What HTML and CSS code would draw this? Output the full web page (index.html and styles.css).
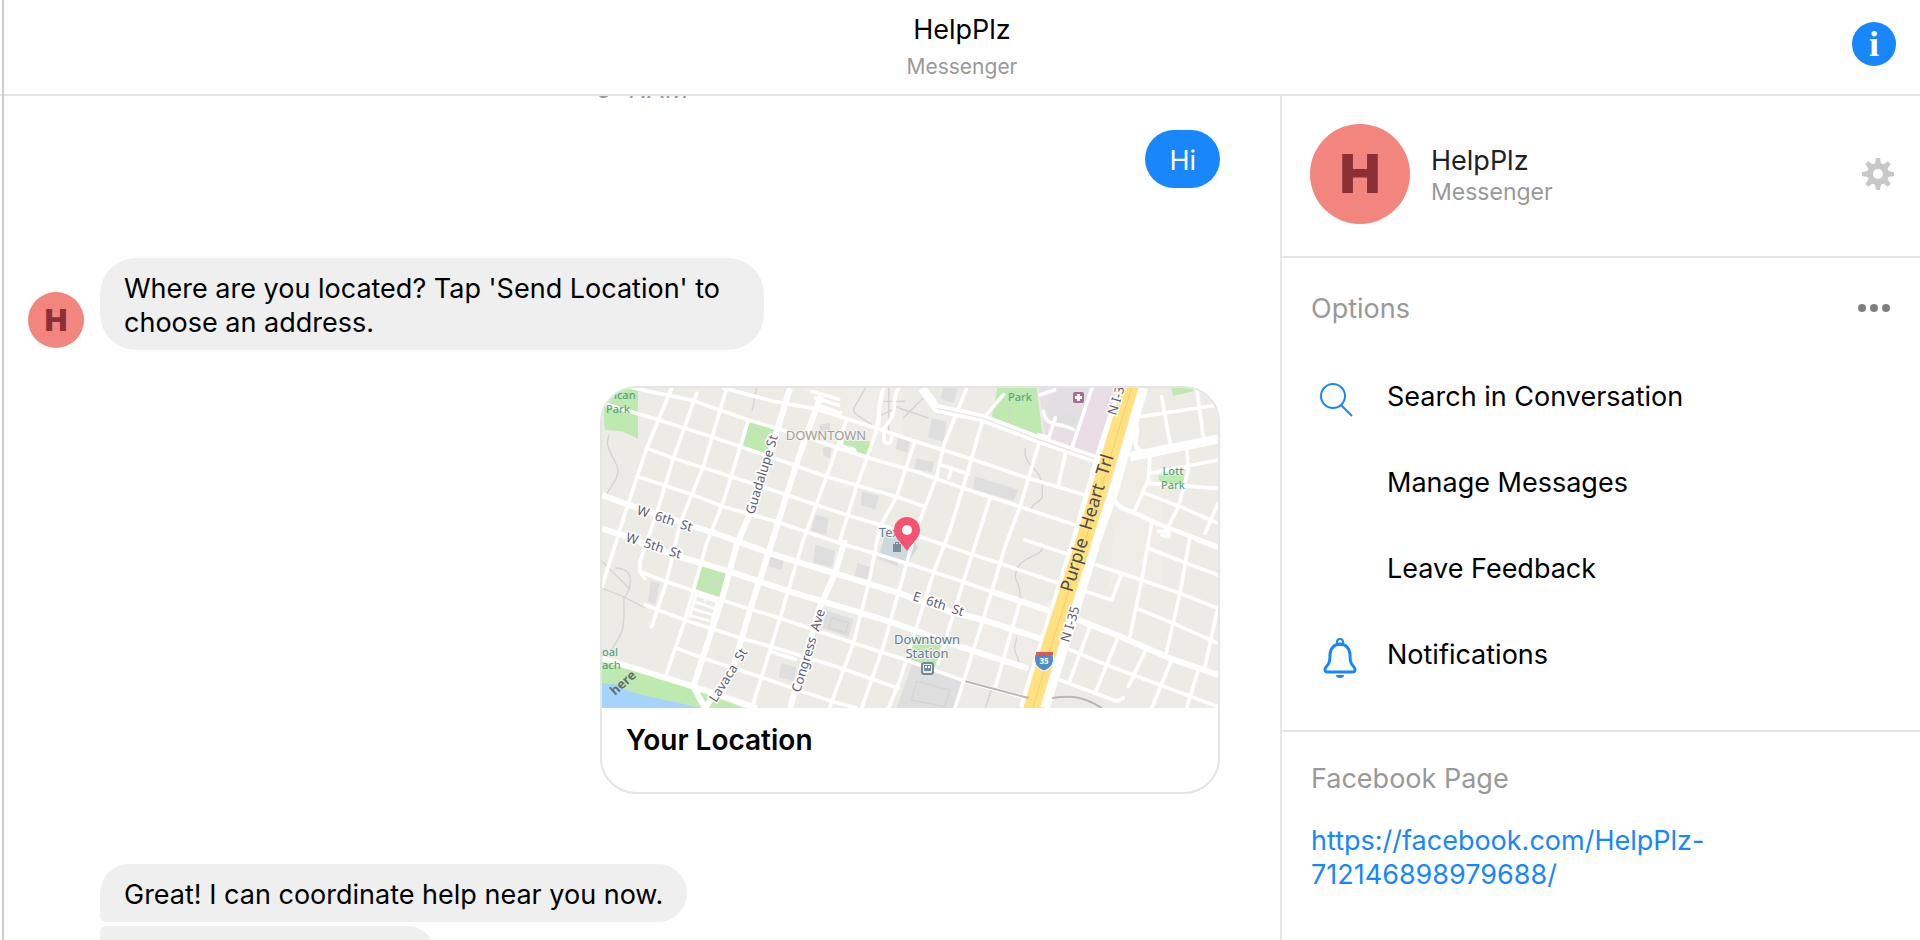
FILE: index.html
```html
<!DOCTYPE html>
<html lang="en">
<head>
<meta charset="utf-8">
<title>HelpPlz - Messenger</title>
<link rel="stylesheet" href="styles.css">
</head>
<body>
<div class="app">
  <header class="topbar">
    <div class="topbar-title">
      <h1 class="name">HelpPlz</h1>
      <p class="meta">Messenger</p>
    </div>
    <button class="info" type="button" aria-label="Conversation information">i</button>
  </header>
  <div class="body">
    <main class="chat">
      <p class="stamp">9:41AM</p>
      <div class="row out"><p class="bubble mine">Hi</p></div>
      <div class="row in">
        <span class="avatar small">H</span>
        <p class="bubble theirs">Where are you located? Tap 'Send Location' to choose an address.</p>
      </div>
      <div class="row out">
        <article class="card">
          <svg class="map" viewBox="0 0 616 320" role="img" aria-label="Map of downtown">
            <g transform="scale(.33333)">
              <path fill="#f0ece8" d="M1560 200h120v400h-160zM1160 640h200v180h-240zM600 0h300v300h-200z"/>
              <path fill="#eaddE6" d="M1310 0H1560L1480 200 1330 150z"/>
              <path fill="#e1dfe1" d="M1360 0h120l-70 140-90-60z"/>
              <g fill="#beeab0">
                <path d="M0 0H108V152L60 130 8 125zM443 100 516 123 495 198 423 176zM710 156 814 160 804 205 700 165zM1186 0h118l18 145-155-45zM1708 0h66v10l-60 14zM1670 262h78v30l-50 4-28-20zM300 528l78 24-20 76-78-24zM930 730l88 40-20 70-72-22zM0 800l264 90 160 70H300L0 900z"/>
              </g>
              <path fill="#a5d3fb" d="M0 886 60 890 124 922 300 960H0z"/>
              <path fill="#beeab0" d="M60 890l64 22v10l-60-18z"/>
              <g fill="#dfdede">
                <path d="M652 110l32-6v30l-30-6zM662 180l28-8-6 40-20-10zM886 150l36 10-6 34-34-10zM780 310l50 14-10 40-44-12zM640 380l40 10-8 50-44-12zM640 470l60 18-10 50-56-14zM840 470l56 20-10 44-60-20zM505 505l40 12-6 30-40-12zM766 525l44 14-8 36-44-12zM146 580l28 6-14 62-22-6zM674 668l80 26-14 52-80-26zM538 826l46 12-10 42-44-12zM1024 0h44l-14 46-38-14zM990 90l44 12-10 60-46-14zM944 212l52 10-6 30-54-10zM1120 265l128 40-12 34-124-36zM1370 70l56 20-10 20-60-10zM930 830l150 50-24 80H884z"/>
              </g>
              <path fill="#cfd8dd" d="M852 418h60l36 60-30 45-82-26z"/>
              <g fill="none" stroke="#d4d3d2" stroke-width="4">
                <path d="M22 140C0 180 50 220 48 250S20 300 14 320M0 520l80 80M0 600l60 24 70 36M40 540c60 0 50 60 26 90 0 100 4 90-40 160M464 0l-14 70M450 105l60 70M790 0c-40 80-60 60 20 110M860 0v130M830 40l80 0M834 84l60-30M904 90l60-60M890 60l90 30M1226 60c-20 60 20 50 26 90M1270 180c-10 60 60 60 50 130 10 40-40 30-30 60M1320 480c0 30-80 20-80 90 20 40 10 40 16 60M1244 750c-20 60 20 50 0 90M1170 900l-20 60"/>
                <path stroke="#d6d5d5" d="M944 880l100 26-16 50-100-20zM310 550l60 70M370 560l-70 50M690 690l50 14-10 30-50-14z"/>
              </g>
              <g fill="none" stroke="#fff" stroke-linecap="round" stroke-linejoin="round" stroke-width="11">
                <path d="M94 0 274 38 439 96 624 151 709 181 804 211 944 251 1084 301 1254 356 1419 411"/>
                <path d="M364 0 519 41 634 61 824 121 934 158 1109 213 1279 271 1449 321"/>
                <path d="M0 46 154 91 329 146 504 206 674 266 884 326 969 356"/>
                <path d="M134 181 214 211 389 266 554 321 734 381 954 446 1114 501 1194 526 1369 586"/>
                <path d="M109 266 274 321 364 356 524 401 714 466 834 501 914 526 1084 581 1169 611"/>
                <path d="M114 551 194 581 359 636 534 691 654 731 834 791 914 816 1094 881 1279 931"/>
                <path d="M129 651 249 696 419 751 509 776 719 841 889 901"/>
                <path d="M224 781 304 811 474 866 604 911 694 941 764 960M510 792l70 22"/>
                <path d="M1484 531 1619 576 1734 616 1848 661M1439 606l90 30 30-80M1394 781l120 50 160 60 174 65M1604 661l110 45 134 60M1639 481l115 45 94 35M1784 456l64 25M1269 456l120 40M1374 876l170 64 20-10"/>
                <path d="M209 0 134 181 74 361 0 596M284 16 214 211 164 376 114 521v30l14 20M374 0 304 236 234 406 194 581 149 716M439 96 364 341 314 466 249 696 194 856"/>
                <path d="M734 96 674 266 604 456 534 691 454 946M844 0l-24 140M824 126 764 296 714 456M939 158 884 326 834 416 799 591 754 766 684 956M1094 0 1024 176 1004 266 939 436 914 526 844 776 779 960M1204 20 1144 91 1084 296 1044 426 994 556 894 876 860 960"/>
                <path d="M1314 156 1254 356 1209 476 1169 611 1124 756 1059 960M1394 181l-25 110M1164 331 1124 456 1084 581 1009 826M1254 641 1179 901M1020 232l80 26M1050 240l-10 30"/>
                <path d="M1614 86 1848 51M1679 26l25 140M1784 0l20 146M1644 256l204-40M1644 201l-5 75-40 90M1639 286l209 15M1629 316l105 40 114 50M1754 176l5 70-30 110-30 60M1848 346l-39 90M1649 406 1619 576 1584 746M1764 446l-30 170-40 175M1848 656l-39 180M1464 716l-60 160M1549 746l-70 170M1634 781l-55 115M1709 816l-60 144M1789 846l-35 114M1670 430h30v16l-20-4M1314 20l44-14M1324 70c10 50 40 30 90 54M1470 0 1409 181M1360 90l-20 60-30-10"/>
                <path d="M630 10l80 24M640 30l70 22M655 55l60 20M844 0c-20 60-10 80-14 110M890 0c-30 50 10 60-44 120v40c10 14 24 4 24-14M720 156c-10 40 40 10 40 40"/>
              </g>
              <path fill="none" stroke="#fff" stroke-width="8" d="M280 620l66 22M274 640l66 22M268 661l66 20M262 682l60 16M284 616l-22 74M346 640l-20 68M312 626l-4 14"/>
              <g fill="none" stroke="#fff" stroke-linejoin="round" stroke-width="18">
                <path d="M0 321 94 356 354 441 504 496 699 556 894 616 1044 671 1144 696 1329 756"/>
                <path d="M0 422 74 446 214 501 384 551 564 611 664 641 864 701 1074 776 1279 841M0 811 114 846 274 896 464 960"/>
                <path d="M564 0 504 196 444 376 404 471 359 636 274 896 309 960M659 16 584 226 504 481 444 666 394 836 309 960M729 456 699 556 654 656 604 826 564 960M1169 611 1349 671M1429 696 1544 741 1704 811 1848 861"/>
              </g>
              <path fill="none" stroke="#fff" stroke-width="26" d="M960 0 1004 61 1144 91 1314 156 1500 220"/>
              <path fill="none" stroke="#e8e6e2" stroke-width="4" d="M1004 61 1144 91 1314 156 1500 220"/>
              <path fill="none" stroke="#fff" stroke-width="28" d="M1554 20 1504 170 1414 481 1264 960M1624 0 1594 106 1534 316 1484 456 1439 606 1329 960M1584 206 1848 153"/>
              <path fill="none" stroke="#fff" stroke-width="14" d="M1594 86c30 60-20 80 30 110M1534 316c0 40 20 40 80 66l50 24 184 70"/>
              <path fill="none" stroke="#ffe17f" stroke-width="48" d="M1588 -14 1584 0 1439 481 1349 756 1289 960 1285 974"/>
              <path fill="none" stroke="#f3cd6f" stroke-width="3" d="M1588 0 1443 481 1353 756 1293 960"/>
              <path fill="none" stroke="#b8b7b7" stroke-width="6" d="M1090 880l190 50M1350 930c70-10 100 0 150 30"/>
            </g>
            <g class="map-road">
              <text transform="translate(34 126) rotate(18)">W&#160; 6th&#160; St</text>
              <text transform="translate(23 153) rotate(18)">W&#160; 5th&#160; St</text>
              <text transform="translate(310 212) rotate(18)">E&#160; 6th&#160; St</text>
              <text transform="translate(152 127) rotate(-73)">Guadalupe St</text>
              <text transform="translate(198 305) rotate(-73)">Congress&#160; Ave</text>
              <text transform="translate(114 315) rotate(-58)">Lavaca&#160; St</text>
              <text transform="translate(514 28) rotate(-73)">N I-35</text>
              <text transform="translate(467 255) rotate(-73)">N I-35</text>
            </g>
            <text class="map-highway" transform="translate(470 205) rotate(-73)">Purple&#160; Heart&#160; Trl</text>
            <text class="map-area" x="224" y="52" text-anchor="middle">DOWNTOWN</text>
            <g class="map-park">
              <text x="12" y="11">ican</text><text x="4" y="25">Park</text>
              <text x="406" y="13">Park</text>
              <text x="571" y="87" text-anchor="middle">Lott</text><text x="571" y="101" text-anchor="middle">Park</text>
              <text x="0" y="268">oal</text><text x="0" y="281">ach</text>
            </g>
            <g class="map-place" text-anchor="middle">
              <text x="287" y="149">Tex</text>
              <text x="325" y="256">Downtown</text><text x="325" y="270">Station</text>
            </g>
            <text class="map-logo" transform="translate(13 308) rotate(-42)">here</text>
            <path fill="#7a8d9b" d="M291 156h8v8h-8zM293 156v-2h4v2h-1v-1h-2v1z"/>
            <rect x="320" y="275" width="11" height="11" rx="2" fill="#e9eef2" stroke="#71899a" stroke-width="2"/>
            <path fill="#71899a" d="M322 277h7v6h-7z"/><path fill="#fff" d="M323 278h2v2h-2zM326 278h2v2h-2z"/>
            <rect x="471" y="4" width="11" height="11" rx="2" fill="#a96c93"/>
            <path fill="#fff" d="M475 6h3v2h2v3h-2v2h-3v-2h-2v-3h2z"/>
            <path fill="#4d8bca" stroke="#fff" d="M433 266h18c2 10-2 14-9 17-7-3-11-7-9-17z"/>
            <path fill="#d85a5a" d="M434 264h17v3h-17z"/>
            <text class="map-shield" x="442" y="276" text-anchor="middle">35</text>
            <path fill="#f4546f" d="M305 163c-5-8-13-13-13-21a13 13 0 0 1 26 0c0 8-8 13-13 21z"/>
            <circle cx="305" cy="142" r="5" fill="#fff"/>
          </svg>
          <h2 class="card-title">Your Location</h2>
        </article>
      </div>
      <div class="row in group">
        <p class="bubble theirs first">Great! I can coordinate help near you now.</p>
        <p class="bubble theirs next">How can we help you?</p>
      </div>
    </main>
    <aside class="side">
      <section class="profile">
        <span class="avatar large">H</span>
        <div class="profile-text">
          <h2 class="profile-name">HelpPlz</h2>
          <p class="profile-meta">Messenger</p>
        </div>
        <button class="icon-btn" type="button" aria-label="Settings">
          <svg class="gear" viewBox="0 0 32 32"><g fill="#c8c8c8"><path id="tooth" d="M13 6 14 0h4l1 6v20l-1 6h-4l-1-6z"/><use href="#tooth" transform="rotate(45 16 16)"/><use href="#tooth" transform="rotate(90 16 16)"/><use href="#tooth" transform="rotate(135 16 16)"/><circle cx="16" cy="16" r="11"/></g><circle cx="16" cy="16" r="5" fill="#fff"/></svg>
        </button>
      </section>
      <section class="options">
        <div class="section-head">
          <h3 class="section-title">Options</h3>
          <button class="icon-btn" type="button" aria-label="More options">
            <svg class="dots" viewBox="0 0 32 10" fill="#808080"><circle cx="4" cy="4" r="4"/><circle cx="16" cy="4" r="4"/><circle cx="28" cy="4" r="4"/></svg>
          </button>
        </div>
        <button class="option" type="button">
          <svg class="option-icon" viewBox="0 0 40 40" fill="none" stroke="#1787fb" stroke-width="2"><circle cx="14" cy="19" r="12"/><path d="M22 28l11 11"/></svg>
          <span>Search in Conversation</span>
        </button>
        <button class="option" type="button"><span class="option-icon"></span><span>Manage Messages</span></button>
        <button class="option" type="button"><span class="option-icon"></span><span>Leave Feedback</span></button>
        <button class="option" type="button">
          <svg class="option-icon" viewBox="0 0 40 40" fill="none" stroke="#1787fb" stroke-width="3" stroke-linejoin="round"><circle cx="21" cy="7" r="3" stroke-width="2"/><path d="M21 9c-6 0-10 5-10 11 0 7-1 9-4 12-2 2-1 5 1 5h26c2 0 3-3 1-5-3-3-4-5-4-12 0-6-4-11-10-11z"/><path fill="#1787fb" stroke="none" d="M17 40h8a4 3 0 0 1-8 0z"/></svg>
          <span>Notifications</span>
        </button>
      </section>
      <section class="page">
        <h3 class="section-title">Facebook Page</h3>
        <a class="page-link" href="https://facebook.com/HelpPlz-712146898979688/">https://facebook.com/HelpPlz-712146898979688/</a>
      </section>
    </aside>
  </div>
</div>
</body>
</html>
```
FILE: styles.css
```css
* { box-sizing: border-box; }
body, h1, h2, h3, p { margin: 0; }
body { background: #fff; color: #000; font: 400 27px/34px Inter, "Liberation Sans", sans-serif; }
h1, h2, h3 { font-size: 27px; line-height: 34px; font-weight: 400; }
button { padding: 0; border: 0; background: none; color: inherit; font: inherit; cursor: pointer; }

.app { position: relative; display: flex; flex-direction: column; height: 100vh; overflow: hidden; }
.app::before { content: ""; position: absolute; top: 0; bottom: 0; left: 2px; width: 2px; background: #ccc; z-index: 2; }

.topbar { display: grid; grid-template-columns: 1fr auto 1fr; align-items: center; flex: none; height: 96px; padding: 0 24px; border-bottom: 2px solid #e5e5e5; }
.topbar-title { grid-column: 2; text-align: center; padding-left: 4px; }
.meta { margin-top: 6px; font-size: 21px; line-height: 28px; color: #999; }
.info { justify-self: end; width: 44px; height: 44px; border-radius: 50%; background: #1787fb; color: #fff; font: 700 36px/40px "Liberation Serif", serif; margin-bottom: 6px; }

.body { display: flex; flex: 1; min-height: 0; }
.chat { flex: 0 0 66.6667%; min-width: 0; padding: 0 60px 0 28px; overflow: hidden; }
.stamp { margin: -21px 0 0 36px; text-align: center; font-size: 26px; line-height: 28px; color: #999; }
.row { display: flex; align-items: flex-end; }
.out { justify-content: flex-end; }
.bubble { padding: 14px 24px 10px; border-radius: 36px; }
.mine { margin-top: 27px; background: #1787fb; color: #fff; border-radius: 29px; }
.theirs { background: #efefef; max-width: 664px; }
.in { margin-top: 70px; gap: 16px; }
.avatar { display: flex; flex: none; align-items: center; justify-content: center; border-radius: 50%; background: #f3857f; color: #8b2f37; font-weight: 900; }
.small { width: 56px; height: 56px; font-size: 30px; margin-bottom: 2px; }
.large { width: 100px; height: 100px; font-size: 54px; }
.card { width: 620px; margin-top: 36px; border: 2px solid #e5e5e5; border-radius: 36px; overflow: hidden; }
.map { display: block; width: 100%; height: auto; background: #edebe6; border-radius: 0 16px 0 0; }
.card-title { padding: 15px 24px 35px; font-size: 28px; font-weight: 600; }
.group { flex-direction: column; align-items: flex-start; gap: 4px; padding-left: 72px; }
.first { border-radius: 29px 29px 29px 6px; }
.next { border-radius: 6px 29px 29px 6px; }

.map-road { font: 13px "Noto Sans", sans-serif; fill: #5e5c72; stroke: #fff; stroke-width: 3px; paint-order: stroke; }
.map-highway { font: 18px "Noto Sans", sans-serif; fill: #4d4b50; }
.map-area { font: 13px "Noto Sans", sans-serif; fill: #a09e9a; stroke: #f4f3f1; stroke-width: 2px; paint-order: stroke; }
.map-park { font: 500 11px "Noto Sans", sans-serif; fill: #5ca480; }
.map-place { font: 13px "Noto Sans", sans-serif; fill: #5f7f93; stroke: #f4f4f2; stroke-width: 2px; paint-order: stroke; }
.map-logo { font: 700 13px "Noto Sans", sans-serif; fill: #667065; }
.map-shield { font: 700 8px "Noto Sans", sans-serif; fill: #fff; }

.side { flex: 1; min-width: 0; border-left: 2px solid #e5e5e5; }
.profile { display: flex; align-items: center; gap: 21px; padding: 28px 26px 32px 28px; border-bottom: 2px solid #e5e5e5; }
.profile-text { flex: 1; padding-top: 4px; }
.profile-name { color: #1d2129; line-height: 32px; }
.profile-meta { font-size: 23px; line-height: 30px; color: #999; }
.icon-btn { display: flex; }
.gear { width: 32px; height: 32px; }
.dots { width: 34px; height: 10px; }
.options { padding: 34px 29px 32px; border-bottom: 2px solid #e5e5e5; }
.section-head { display: flex; align-items: center; justify-content: space-between; margin-bottom: 28px; }
.section-title { color: #999; }
.option { display: flex; align-items: center; gap: 28px; width: 100%; height: 86px; padding-left: 8px; text-align: left; }
.option-icon { width: 40px; height: 40px; overflow: visible; }
.page { padding: 30px 29px; }
.page-link { display: block; max-width: 440px; margin-top: 28px; color: #1787fb; text-decoration: none; }
```
